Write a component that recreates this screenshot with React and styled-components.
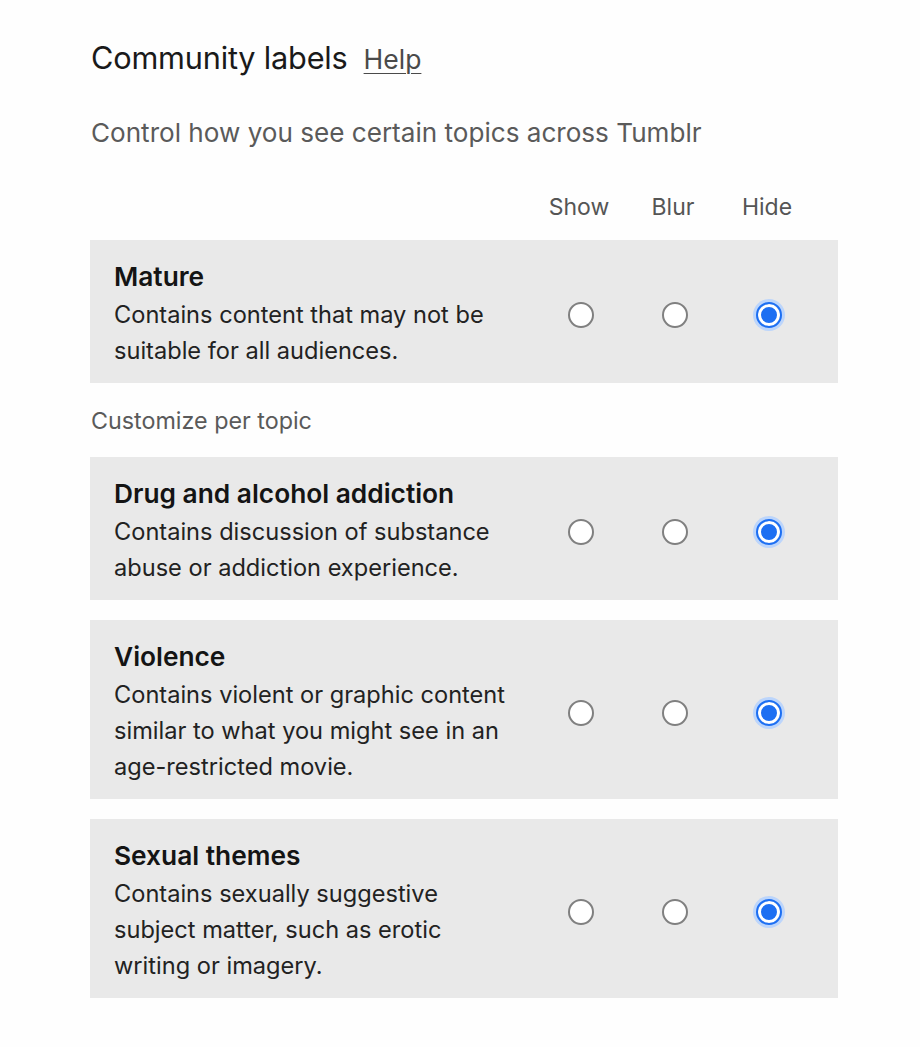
import React from "react";
import styled, { createGlobalStyle } from "styled-components";

const GlobalStyle = createGlobalStyle`
  html, body { margin: 0; padding: 0; background: #fefefe; }
  body { font-family: Inter, "Noto Sans", "Liberation Sans", sans-serif; color: #1a1a1a; }
`;

const Page = styled.div`
  width: 920px;
  min-height: 1047px;
  box-sizing: border-box;
  padding: 42px 0 0 90px;
`;

const Section = styled.section`
  width: 748px;
  display: flex;
  flex-direction: column;
`;

const TitleRow = styled.div`
  display: flex;
  align-items: baseline;
  gap: 16px;
  padding-left: 1px;
`;

const Title = styled.h2`
  margin: 0;
  font-size: 30.7px;
  line-height: 32px;
  font-weight: 400;
  color: #1a1a1a;
  letter-spacing: -0.2px;
`;

const HelpLink = styled.a`
  font-size: 26.5px;
  line-height: 32px;
  color: #4a4a4a;
  text-decoration: underline;
  text-underline-offset: 4px;
  text-decoration-thickness: 1px;
`;

const Subtitle = styled.p`
  margin: 43px 0 0 1px;
  font-size: 26.1px;
  line-height: 30px;
  color: #5a5a5a;
`;

const HeaderRow = styled.div`
  margin-top: 44px;
  display: grid;
  grid-template-columns: 1fr repeat(3, 94px);
  padding: 0 22px 0 24px;
`;

const HeaderLabel = styled.span`
  grid-column: ${(p) => p.$col};
  text-align: center;
  font-size: 23px;
  line-height: 30px;
  color: #555;
  transform: translateX(-2px);
`;

const Card = styled.div`
  display: grid;
  grid-template-columns: 1fr repeat(3, 94px);
  align-items: center;
  background: #e9e9e9;
  padding: 17px 22px 14px 24px;
  margin-top: ${(p) => p.$mt}px;
`;

const CardText = styled.div`
  display: flex;
  flex-direction: column;
`;

const CardTitle = styled.div`
  font-size: 26.3px;
  line-height: 40px;
  font-weight: 600;
  color: #141414;
`;

const CardDesc = styled.div`
  font-size: 23.6px;
  line-height: 36px;
  color: #222;
  white-space: nowrap;
`;

const RadioCell = styled.label`
  display: flex;
  justify-content: center;
  align-items: center;
  padding-top: 3px;
`;

const Radio = styled.span`
  box-sizing: border-box;
  width: 26px;
  height: 26px;
  border-radius: 50%;
  background: #fff;
  border: 2px solid ${(p) => (p.$checked ? "#1d6ff2" : "#808080")};
  box-shadow: ${(p) =>
    p.$checked ? "inset 0 0 0 3px #fff, inset 0 0 0 11px #1d6ff2, 0 0 0 3px #bcd5fb" : "none"};
`;

const SectionNote = styled.div`
  margin-top: 24px;
  padding-left: 1px;
  font-size: 23.3px;
  line-height: 28px;
  color: #5a5a5a;
`;

const mature = {
  title: "Mature",
  lines: ["Contains content that may not be", "suitable for all audiences."],
};

const topics = [
  {
    title: "Drug and alcohol addiction",
    lines: ["Contains discussion of substance", "abuse or addiction experience."],
  },
  {
    title: "Violence",
    lines: [
      "Contains violent or graphic content",
      "similar to what you might see in an",
      "age-restricted movie.",
    ],
  },
  {
    title: "Sexual themes",
    lines: [
      "Contains sexually suggestive",
      "subject matter, such as erotic",
      "writing or imagery.",
    ],
  },
];

const options = ["Show", "Blur", "Hide"];

function LabelCard({ item, selected = "Hide", mt }) {
  return (
    <Card $mt={mt}>
      <CardText>
        <CardTitle>{item.title}</CardTitle>
        {item.lines.map((l) => (
          <CardDesc key={l}>{l}</CardDesc>
        ))}
      </CardText>
      {options.map((o) => (
        <RadioCell key={o} aria-label={o}>
          <Radio $checked={o === selected} />
        </RadioCell>
      ))}
    </Card>
  );
}

export default function App() {
  return (
    <Page>
      <GlobalStyle />
      <Section>
        <TitleRow>
          <Title>Community labels</Title>
          <HelpLink href="#">Help</HelpLink>
        </TitleRow>
        <Subtitle>Control how you see certain topics across Tumblr</Subtitle>
        <HeaderRow>
          {options.map((o, i) => (
            <HeaderLabel key={o} $col={i + 2}>
              {o}
            </HeaderLabel>
          ))}
        </HeaderRow>
        <LabelCard item={mature} mt={18} />
        <SectionNote>Customize per topic</SectionNote>
        {topics.map((t, i) => (
          <LabelCard key={t.title} item={t} mt={i === 0 ? 22 : 20} />
        ))}
      </Section>
    </Page>
  );
}
